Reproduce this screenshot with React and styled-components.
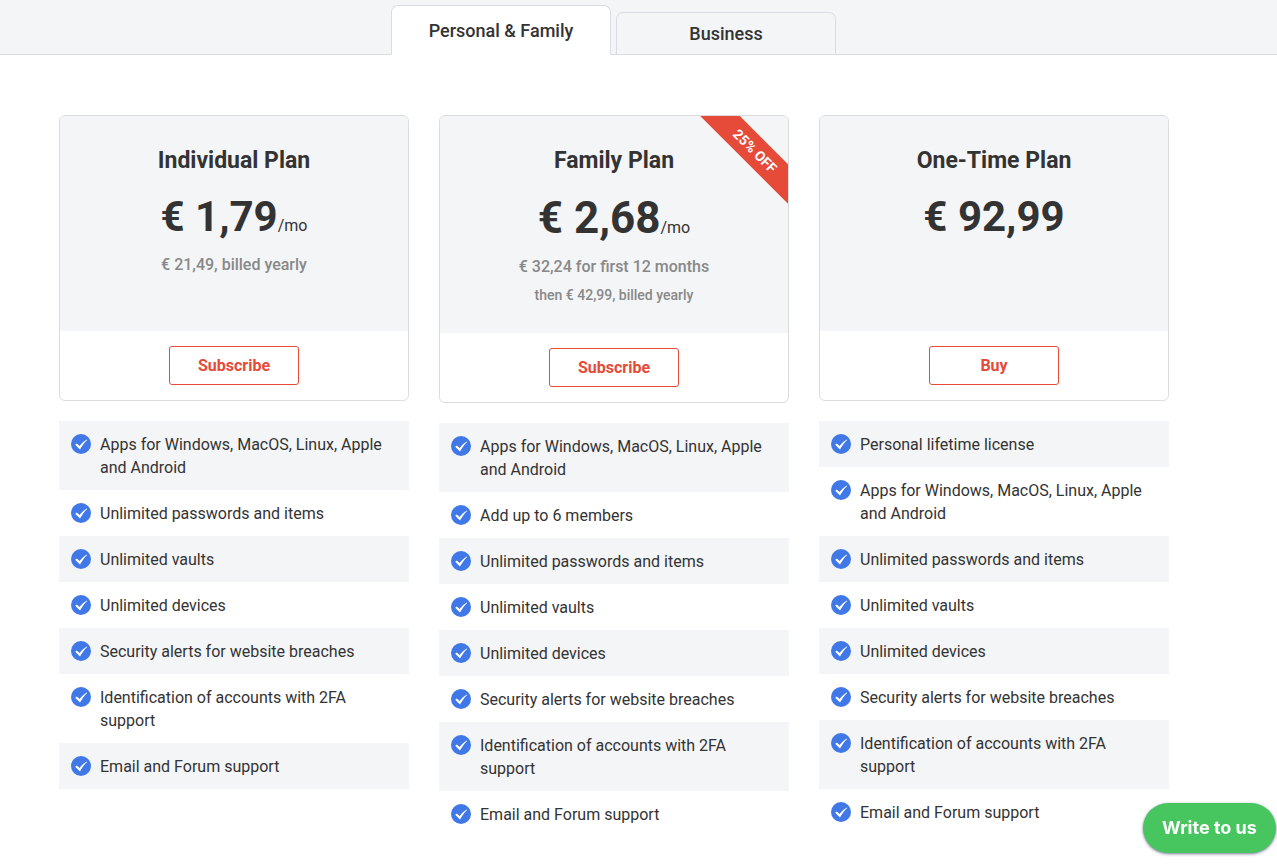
import React from "react";
import styled, { createGlobalStyle } from "styled-components";

const GlobalStyle = createGlobalStyle`
  *, *::before, *::after { box-sizing: border-box; }
  body {
    margin: 0;
    background: #fff;
    color: #333;
    font-family: Roboto, "Liberation Sans", sans-serif;
    font-size: 16px;
  }
`;

const TabBar = styled.nav`
  display: flex;
  justify-content: center;
  align-items: flex-end;
  gap: 5px;
  padding: 5px 50px 0 0;
  background: #f3f5f7;
  box-shadow: inset 0 -1px #dadbe3;
`;

const Tab = styled.button`
  width: 220px;
  height: ${(p) => (p.$active ? 50 : 43)}px;
  padding: ${(p) => (p.$active ? 2 : 1)}px 0 0;
  border: 1px solid #dadbe3;
  border-bottom-color: ${(p) => (p.$active ? "#fff" : "#dadbe3")};
  border-radius: 7px 7px 0 0;
  background: ${(p) => (p.$active ? "#fff" : "#f3f5f7")};
  color: #333;
  font: 500 18px/24px Roboto, "Liberation Sans", sans-serif;
  cursor: pointer;
`;

const Plans = styled.main`
  display: grid;
  grid-template-columns: repeat(3, minmax(0, 350px));
  justify-content: center;
  align-items: start;
  gap: 30px;
  padding: 60px 49px 24px 0;
`;

const Card = styled.article`
  position: relative;
  overflow: hidden;
  border: 1px solid #dadcdd;
  border-radius: 6px;
  text-align: center;
`;

const CardHead = styled.header`
  min-height: 215px;
  padding: 29px 16px 26px;
  background: #f3f5f7;
`;

const PlanName = styled.h2`
  margin: 0 0 16px;
  font-size: 23px;
  line-height: 32px;
  font-weight: 700;
`;

const Price = styled.p`
  margin: 0 0 12px;
  font-size: 16px;
  line-height: 24px;
`;

const Amount = styled.strong`
  font-size: ${(p) => (p.$large ? 44 : 42)}px;
  line-height: ${(p) => (p.$large ? 50 : 48)}px;
  font-weight: 700;
`;

const Billing = styled.p`
  margin: 0;
  color: #888;
  font-size: 16px;
  line-height: 24px;
  font-weight: 500;
`;

const Renewal = styled(Billing)`
  margin-top: 4px;
  font-size: 14px;
`;

const CardFoot = styled.footer`
  padding: 15px;
`;

const Action = styled.button`
  width: 130px;
  height: 39px;
  padding: 0;
  border: 1px solid #e64a38;
  border-radius: 3px;
  background: #fff;
  color: #e64a38;
  font: 700 16px/24px Roboto, "Liberation Sans", sans-serif;
  cursor: pointer;
`;

const Ribbon = styled.span`
  position: absolute;
  top: 21px;
  right: -42px;
  width: 150px;
  height: 28px;
  transform: rotate(45deg);
  background: #e64a38;
  color: #fff;
  font-size: 14px;
  line-height: 28px;
  font-weight: 700;
`;

const Features = styled.ul`
  margin: 20px 0 0;
  padding: 0;
  list-style: none;
`;

const Feature = styled.li`
  display: flex;
  gap: 9px;
  padding: 12px 12px 11px;
  line-height: 23px;
  &:nth-child(odd) { background: #f3f5f7; }
`;

const Check = styled.svg`
  flex: none;
  width: 20px;
  height: 20px;
  margin-top: 1px;
`;

const Chat = styled.button`
  position: fixed;
  right: 1px;
  bottom: 12px;
  min-width: 133px;
  height: 50px;
  padding: 0 16px;
  border: 0;
  border-radius: 25px;
  background: #47c660;
  box-shadow: 0 1px 3px rgba(30, 30, 80, 0.6);
  color: #fff;
  font: 700 18px/24px Inter, "Liberation Sans", sans-serif;
  cursor: pointer;
`;

const apps = "Apps for Windows, MacOS, Linux, Apple and Android";
const common = [
  "Unlimited passwords and items",
  "Unlimited vaults",
  "Unlimited devices",
  "Security alerts for website breaches",
  "Identification of accounts with 2FA support",
  "Email and Forum support",
];

const plans = [
  {
    name: "Individual Plan",
    price: "€ 1,79",
    monthly: true,
    billing: "€ 21,49, billed yearly",
    action: "Subscribe",
    features: [apps, ...common],
  },
  {
    name: "Family Plan",
    price: "€ 2,68",
    monthly: true,
    large: true,
    billing: "€ 32,24 for first 12 months",
    renewal: "then € 42,99, billed yearly",
    discount: "25% OFF",
    action: "Subscribe",
    features: [apps, "Add up to 6 members", ...common],
  },
  {
    name: "One-Time Plan",
    price: "€ 92,99",
    action: "Buy",
    features: ["Personal lifetime license", apps, ...common],
  },
];

function CheckIcon() {
  return (
    <Check viewBox="0 0 20 20" aria-hidden="true">
      <circle cx="10" cy="10" r="10" fill="#4078e8" />
      <path d="M4.2 10.7 5.8 9.4 8.6 12.1C10.5 9.3 12.7 7.2 15.8 5.4L16.2 5.9C13.2 8.6 11 11.7 9 15.5Z" fill="#fff" />
    </Check>
  );
}

export default function App() {
  return (
    <>
      <GlobalStyle />
      <TabBar aria-label="Plan types">
        <Tab type="button" $active>Personal &amp; Family</Tab>
        <Tab type="button">Business</Tab>
      </TabBar>
      <Plans>
        {plans.map((plan) => (
          <section key={plan.name}>
            <Card>
              <CardHead>
                <PlanName>{plan.name}</PlanName>
                <Price>
                  <Amount $large={plan.large}>{plan.price}</Amount>
                  {plan.monthly && "/mo"}
                </Price>
                {plan.billing && <Billing>{plan.billing}</Billing>}
                {plan.renewal && <Renewal>{plan.renewal}</Renewal>}
              </CardHead>
              <CardFoot>
                <Action type="button">{plan.action}</Action>
              </CardFoot>
              {plan.discount && <Ribbon>{plan.discount}</Ribbon>}
            </Card>
            <Features>
              {plan.features.map((feature) => (
                <Feature key={feature}>
                  <CheckIcon />
                  <span>{feature}</span>
                </Feature>
              ))}
            </Features>
          </section>
        ))}
      </Plans>
      <Chat type="button">Write to us</Chat>
    </>
  );
}
